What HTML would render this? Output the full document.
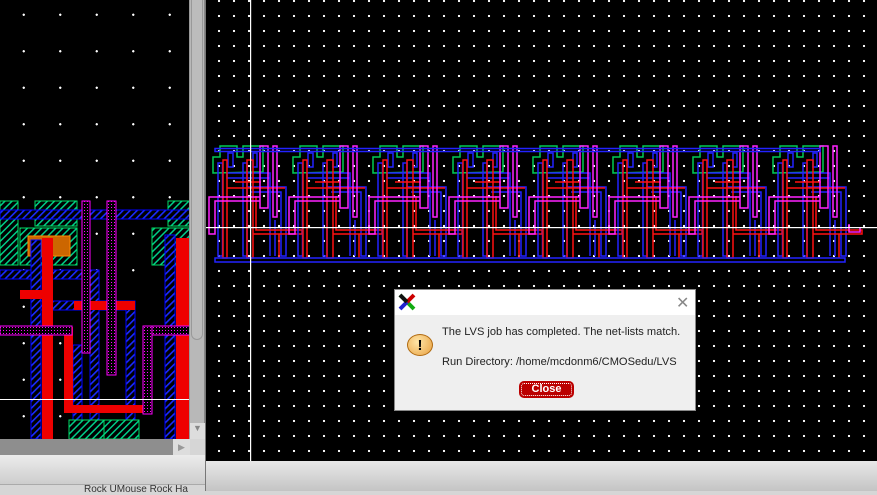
<!DOCTYPE html>
<html><head><style>
*{margin:0;padding:0;box-sizing:border-box}
body{width:877px;height:491px;overflow:hidden;background:#d6d6d6;font-family:"Liberation Sans","DejaVu Sans",sans-serif;position:relative}
.abs{position:absolute}
#lp{left:0;top:0;width:190px;height:439px;background-color:#000;background-image:radial-gradient(circle,#fff 1px,transparent 1.3px);background-size:36.5px 36.5px;background-position:5.5px -3.5px}
#rp{left:206px;top:0;width:671px;height:461px;background-color:#000;background-image:radial-gradient(circle,#fff 1px,transparent 1.3px);background-size:15px 15px;background-position:5.5px -6.5px}
#dlg{left:394px;top:289px;width:302px;height:122px;background:#efefef;border:1px solid #888;box-shadow:0 0 2px #000}
#dlg .tb{height:25px;background:#fff}
#dlg p{position:absolute;left:47px;font-size:11.1px;color:#222}
#close{position:absolute;left:124px;top:91px;width:55px;height:17px;background:#b00;border-radius:5px;color:#fff;font-weight:bold;font-size:11px;text-align:center;line-height:17px;outline:1px dotted #fff;outline-offset:-3px}
</style></head><body>
<div id="lp" class="abs"></div>
<svg class="abs" style="left:0;top:0" width="190" height="439">
<defs>
<pattern id="bh" width="5" height="5" patternUnits="userSpaceOnUse" patternTransform="rotate(45)"><rect width="5" height="5" fill="#000"/><rect width="1.6" height="5" fill="#1a2cff"/></pattern>
<pattern id="gh" width="5" height="5" patternUnits="userSpaceOnUse" patternTransform="rotate(45)"><rect width="5" height="5" fill="#000"/><rect width="1.5" height="5" fill="#0c8"/></pattern>
<pattern id="md" width="3" height="3" patternUnits="userSpaceOnUse"><rect width="3" height="3" fill="#000"/><rect width="1" height="1" fill="#f0f"/></pattern>
</defs>
<g stroke-width="1">
<rect x="0" y="201" width="18" height="64" fill="url(#gh)" stroke="#0d6"/>
<rect x="35" y="201" width="42" height="25" fill="url(#gh)" stroke="#0d6"/>
<rect x="20" y="228" width="57" height="37" fill="url(#gh)" stroke="#0d6"/>
<rect x="152" y="228" width="38" height="37" fill="url(#gh)" stroke="#0d6"/>
<rect x="168" y="201" width="22" height="25" fill="url(#gh)" stroke="#0d6"/>
<rect x="0" y="210" width="190" height="9" fill="url(#bh)" stroke="#00f"/>
<rect x="28" y="236" width="42" height="20" fill="#c60" stroke="#f80"/>
<rect x="0" y="270" width="99" height="9" fill="url(#bh)" stroke="#00f"/>
<rect x="40" y="301" width="95" height="9" fill="url(#bh)" stroke="#00f"/>
<rect x="31" y="240" width="10" height="199" fill="url(#bh)" stroke="#00f"/>
<rect x="90" y="270" width="9" height="169" fill="url(#bh)" stroke="#00f"/>
<rect x="126" y="301" width="9" height="138" fill="url(#bh)" stroke="#00f"/>
<rect x="165" y="235" width="10" height="204" fill="url(#bh)" stroke="#00f"/>
<rect x="73" y="345" width="9" height="94" fill="url(#bh)" stroke="#00f"/>
<rect x="42" y="238" width="11" height="201" fill="#e00"/>
<rect x="176" y="238" width="13" height="201" fill="#e00"/>
<rect x="20" y="290" width="22" height="9" fill="#e00"/>
<rect x="74" y="301" width="61" height="9" fill="#e00"/>
<rect x="64" y="327" width="9" height="85" fill="#e00"/>
<rect x="64" y="405" width="88" height="8" fill="#e00"/>
<rect x="82" y="201" width="8" height="152" fill="url(#md)" stroke="#f0f"/>
<rect x="107" y="201" width="9" height="174" fill="url(#md)" stroke="#f0f"/>
<rect x="0" y="326" width="72" height="9" fill="url(#md)" stroke="#f0f"/>
<rect x="143" y="326" width="47" height="9" fill="url(#md)" stroke="#f0f"/>
<rect x="143" y="326" width="9" height="88" fill="url(#md)" stroke="#f0f"/>
<rect x="69" y="420" width="35" height="19" fill="url(#gh)" stroke="#0d6"/>
<rect x="104" y="420" width="35" height="19" fill="url(#gh)" stroke="#0d6"/>
</g>
<rect x="0" y="399" width="190" height="1" fill="#fff"/>
</svg>
<div class="abs" style="left:189px;top:0;width:16px;height:439px;background:#b8b8b8;border-left:1px solid #999;border-right:1px solid #888"></div>
<div class="abs" style="left:191px;top:0;width:12px;height:340px;background:#bcbcbc;border:1px solid #999;border-top:none;border-radius:0 0 6px 6px"></div>
<div class="abs" style="left:190px;top:423px;width:15px;height:16px;background:#ddd;color:#888;font-size:9px;text-align:center">▼</div>
<div class="abs" style="left:0;top:439px;width:190px;height:16px;background:#8e8e8e"></div>
<div class="abs" style="left:173px;top:439px;width:17px;height:16px;background:#ddd;color:#999;font-size:9px;text-align:center;line-height:16px">▶</div>
<div class="abs" style="left:0;top:455px;width:205px;height:30px;background:linear-gradient(#ececec,#cdcdcd);border-bottom:1px solid #aaa"></div>
<div class="abs" style="left:84px;top:485px;font-size:10px;color:#333;line-height:10px">Rock UMouse  Rock Ha</div>
<div class="abs" style="left:205px;top:0;width:1px;height:491px;background:#777"></div>
<div id="rp" class="abs"></div>
<div class="abs" style="left:206px;top:461px;width:671px;height:30px;background:linear-gradient(#e8e8e8,#c4c4c4)"></div>
<svg class="abs" style="left:0;top:0" width="877" height="461">
<defs>
<g id="cell" fill="none" stroke-width="1.5">
<path d="M0,173 V157 H7 V146 H24 V157 H30 V146 H50 V172 Z" stroke="#0c5"/>
<path d="M5,163 H9.5 V256 H5 Z M15,153 H20 V167 H15 Z M30,163 H34 V256 H30 Z M40,153 H44 V167 H40 Z M34,187 H73 V256 H68 V192 H38 M14,173 H57 V178 H14 Z M57,178 V256 M62,220 V256" stroke="#22f"/>
<path d="M10,160 H14 V258 H10 Z M34,160 H40 V258 H34 Z M14,188 H72 M43,196 V230 H89 V234 H40 M22,182 H48 M66,234 V258" stroke="#f11"/>
<path d="M60,146 H64 V217 H60 Z M47,146 H55 V208 H47 Z M-4,197 H47 V201 H2 V234 H-4 Z" stroke="#f2f"/>
</g>
</defs>
<use href="#cell" x="213"/><use href="#cell" x="293"/><use href="#cell" x="373"/><use href="#cell" x="453"/>
<use href="#cell" x="533"/><use href="#cell" x="613"/><use href="#cell" x="693"/><use href="#cell" x="773"/>
<rect x="215" y="148.5" width="605" height="3" fill="none" stroke="#22f" stroke-width="1.5"/>
<rect x="215" y="258" width="630" height="4" fill="none" stroke="#22f" stroke-width="1.5"/>
<path d="M849,224 V232 H860 V228" fill="none" stroke="#f2f" stroke-width="1.5"/>
<rect x="206" y="227" width="671" height="1.2" fill="#fff"/>
<rect x="250" y="0" width="1.2" height="461" fill="#fff"/>
</svg>
<div id="dlg" class="abs">
<div class="tb"></div>
<svg class="abs" style="left:3px;top:3px" width="18" height="18"><path d="M2,2 L16,16" stroke="#1a1" stroke-width="4"/><path d="M16,2 L9,9" stroke="#c00" stroke-width="4"/><path d="M9,9 L2,16" stroke="#22c" stroke-width="4"/><path d="M2,2 L9,9" stroke="#111" stroke-width="4"/></svg>
<div class="abs" style="left:281px;top:3px;font-size:16px;color:#888">✕</div>
<div class="abs" style="left:12px;top:44px;width:26px;height:22px;border-radius:50%;background:radial-gradient(circle at 40% 35%,#ffe6a8,#e8a040);border:1px solid #b06a10;text-align:center;font-weight:bold;font-size:15px;line-height:21px;color:#000">!</div>
<p style="top:36px">The LVS job has completed. The net-lists match.</p>
<p style="top:66px">Run Directory: /home/mcdonm6/CMOSedu/LVS</p>
<div id="close">Close</div>
</div>
</body></html>
